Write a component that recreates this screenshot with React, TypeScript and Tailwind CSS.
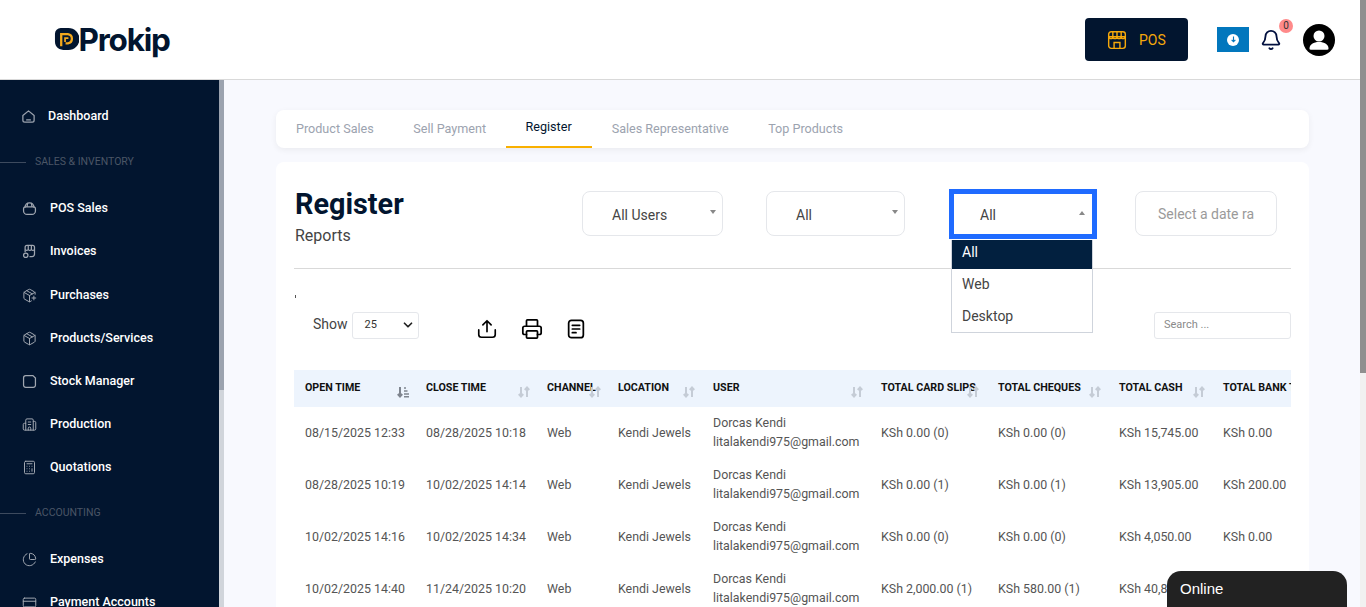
import { Bell, Building2, Calculator, ChartPie, ChevronDown, CreditCard, Package, PackagePlus, Printer } from "lucide-react"

const navTop = [
  { label: "POS Sales", icon: BasketIcon, cls: "h-[43px]" },
  { label: "Invoices", icon: ShopIcon, cls: "h-[43px]", shift: "ml-[1px]" },
  { label: "Purchases", icon: PackagePlus, cls: "h-[44px]" },
  { label: "Products/Services", icon: Package, cls: "h-[43px]" },
  { label: "Stock Manager", icon: FolderIcon, cls: "h-[43px]" },
  { label: "Production", icon: Building2, cls: "h-[43px]" },
  { label: "Quotations", icon: Calculator, cls: "h-[43px]" },
]

const tabs = ["Product Sales", "Sell Payment", "Register", "Sales Representative", "Top Products"]

const columns = [
  { label: "OPEN TIME", width: "w-[121px]", sort: "right-[6px]", active: true },
  { label: "CLOSE TIME", width: "w-[121px]", sort: "right-[6px]" },
  { label: "CHANNEL", width: "w-[71px]", sort: "right-[6px]" },
  { label: "LOCATION", width: "w-[95px]", sort: "right-[7px]" },
  { label: "USER", width: "w-[168px]", sort: "right-[7px]" },
  { label: "TOTAL CARD SLIPS", width: "w-[117px]", sort: "right-[8px]" },
  { label: "TOTAL CHEQUES", width: "w-[121px]", sort: "right-[7px]" },
  { label: "TOTAL CASH", width: "w-[104px]", sort: "right-[7px]" },
  { label: "TOTAL BANK TRANSFERS", width: "w-[79px]", sort: "" },
]

const widths = ["w-[121px]", "w-[121px]", "w-[71px]", "w-[95px]", "w-[168px]", "w-[117px]", "w-[121px]", "w-[104px]", "w-[79px]"]

const rows = [
  ["08/15/2025 12:33", "08/28/2025 10:18", "KSh 0.00 (0)", "KSh 0.00 (0)", "KSh 15,745.00", "KSh 0.00"],
  ["08/28/2025 10:19", "10/02/2025 14:14", "KSh 0.00 (1)", "KSh 0.00 (1)", "KSh 13,905.00", "KSh 200.00"],
  ["10/02/2025 14:16", "10/02/2025 14:34", "KSh 0.00 (0)", "KSh 0.00 (0)", "KSh 4,050.00", "KSh 0.00"],
  ["10/02/2025 14:40", "11/24/2025 10:20", "KSh 2,000.00 (1)", "KSh 580.00 (1)", "KSh 40,860.00", "KSh 0.00"],
]

function BasketIcon({ className }: { className?: string }) {
  return (
    <svg viewBox="0 0 24 24" fill="none" stroke="currentColor" strokeWidth="2" className={className}>
      <path d="M4.500 11C5 6 8 3 12 3s7 3 7.500 8" />
      <path d="M2.500 12.500c0-1.800 1.200-3 3-3h13c1.800 0 3 1.200 3 3V16c0 3-2.500 5.500-5.500 5.500H8C5 21.500 2.500 19 2.500 16z" />
      <path d="M9 3.500 8 9.500M15 3.500l1 6" />
    </svg>
  )
}

function FolderIcon({ className }: { className?: string }) {
  return (
    <svg viewBox="0 0 24 24" fill="none" stroke="currentColor" strokeWidth="2" className={className}>
      <path d="M6 2.500h11.500L21.500 6.500V18a3.500 3.500 0 0 1-3.500 3.500H6A3.500 3.500 0 0 1 2.500 18V6A3.500 3.500 0 0 1 6 2.500z" />
    </svg>
  )
}

function HomeIcon({ className }: { className?: string }) {
  return (
    <svg viewBox="0 0 24 24" fill="none" stroke="currentColor" strokeWidth="2" className={className}>
      <path d="M3 10.500 12 3l9 7.500V18a3 3 0 0 1-3 3H6a3 3 0 0 1-3-3z" strokeLinejoin="round" />
      <path d="M9 17.500h6" strokeLinecap="round" />
    </svg>
  )
}

function ShopIcon({ className }: { className?: string }) {
  return (
    <svg viewBox="0 0 24 24" fill="none" stroke="currentColor" strokeWidth="2" className={className}>
      <path d="M5 13V5a3 3 0 0 1 3-3h9a3 3 0 0 1 3 3v11a4 4 0 0 1-4 4h-4" />
      <path d="M5 9c1.500 1.500 3 1.500 5 0 1.500 1.500 3.500 1.500 5 0 1.500 1.500 3.500 1.500 5 0" />
      <path d="M10 2v7M15 2v7" />
      <circle cx="6" cy="18" r="3.500" />
    </svg>
  )
}

function PosIcon({ className }: { className?: string }) {
  return (
    <svg viewBox="0 0 24 24" fill="none" stroke="currentColor" strokeWidth="1.700" className={className}>
      <rect x="2" y="2" width="20" height="20" rx="3" />
      <path d="M2 8h20M7 2.500V8M12 2.500V8M17 2.500V8" />
      <path d="M2.500 8c0 3 4.500 3 4.500 0 0 3 5 3 5 0 0 3 5 3 5 0 0 3 4.500 3 4.500 0" />
      <path d="M8.500 21.500V15h7v6.500" />
    </svg>
  )
}

function SortIcon({ active }: { active?: boolean }) {
  return (
    <svg viewBox="0 0 12 12" className="h-[12px] w-[12px] text-[#c5ccd6]" fill="none" stroke="currentColor" strokeWidth="2">
      {active ? (
        <g className="text-[#7f858f]">
          <path d="M3 1v9.500M.800 8 3 10.500 5.200 8" />
          <path d="M7 2h2M7 5h3.500M7 8h5M7 10.800h5" strokeWidth="1.500" />
        </g>
      ) : (
        <g>
          <path d="M3 1v9.500M.800 8 3 10.500 5.200 8" />
          <path d="M9 1.500V11M6.800 4 9 1.500 11.200 4" />
        </g>
      )}
    </svg>
  )
}

function SelectBox({ label, w, ml }: { label: string; w: string; ml: string }) {
  return (
    <div className={`flex h-[45px] items-center justify-between rounded-lg border border-[#e5e7eb] bg-white pt-[3px] pl-[29px] pr-[6px] text-[14px] text-[#444] ${w} ${ml}`}>
      <span>{label}</span>
      <span className="mb-[7px] h-0 w-0 border-x-[3px] border-t-[4px] border-x-transparent border-t-[#888]" />
    </div>
  )
}

export default function App() {
  return (
    <div className="relative flex h-[607px] w-[1366px] overflow-hidden bg-[#f8f9fe] font-['Roboto',sans-serif]">
      <div className="flex min-w-0 flex-1 flex-col">
        <header className="flex h-[80px] shrink-0 items-center border-b border-[#d9d9d9] bg-white">
          <div className="ml-[54px] flex items-center">
            <svg viewBox="0 0 26 26" className="h-[25px] w-[25px]">
              <path d="M7 1h8a11.500 11.500 0 0 1 0 23h-3c-6.500 0-11-3-11-9V7a6 6 0 0 1 6-6z" fill="#02152f" />
              <path d="M7.500 20V7.500h7a4.800 4.800 0 0 1 0 9.500H12" fill="none" stroke="#f2a81d" strokeWidth="2.400" />
              <path d="M11.500 15.500V11.500h3.500" fill="none" stroke="#f2a81d" strokeWidth="1.800" />
            </svg>
            <span className="-ml-[0.5px] font-['Inter',sans-serif] text-[31.5px] leading-none font-bold tracking-[-1.2px] text-[#02152f]">Prokip</span>
          </div>
          <div className="ml-auto flex items-center">
            <div className="flex h-[43px] w-[103px] items-center rounded-[4px] bg-[#02152f] pl-[22px] text-[#f5a80b]">
              <PosIcon className="h-[20px] w-[20px]" />
              <span className="mt-[1px] ml-[12px] text-[14px]">POS</span>
            </div>
            <div className="ml-[29px] flex h-[25px] w-[32px] items-center justify-center bg-[#0277bd]">
              <div className="flex h-[12px] w-[12px] items-center justify-center rounded-full bg-white">
                <svg viewBox="0 0 12 12" className="h-[9px] w-[9px] text-[#0277bd]" fill="none" stroke="currentColor" strokeWidth="1.500"><path d="M6 2v7M3.500 6.500 6 9l2.500-2.500" /></svg>
              </div>
            </div>
            <div className="relative ml-[11px] h-[24px] w-[22px]">
              <Bell className="h-[24px] w-[22px] text-[#02103f]" strokeWidth={2} />
              <span className="absolute -top-[9px] left-[19px] flex h-[14px] w-[14px] items-center justify-center rounded-full bg-[#ff8a8a] text-[10px] text-[#333]">0</span>
            </div>
            <div className="ml-[21px] mr-[25px] flex h-[32px] w-[32px] items-center justify-center overflow-hidden rounded-full bg-black">
              <svg viewBox="0 0 32 32" className="h-[32px] w-[32px]" fill="#fff">
                <circle cx="16" cy="12" r="5.500" />
                <path d="M6.500 24.500c0-4 4-6.500 9.500-6.500s9.500 2.500 9.500 6.500c0 .8-.5 1.200-1.200 1.200H7.700c-.7 0-1.200-.4-1.200-1.200z" />
              </svg>
            </div>
          </div>
        </header>
        <div className="flex min-h-0 flex-1">
          <aside className="w-[219px] shrink-0 bg-[#02152f] text-[12.500px] text-white">
            <a className="mt-[15px] flex h-[43px] items-center pl-[21px]">
              <HomeIcon className="h-[15px] w-[15px] text-[#9ca3af]" />
              <span className="ml-[12px] font-medium">Dashboard</span>
            </a>
            <div className="mt-[18px] mb-[19px] flex h-[12px] items-center">
              <span className="h-px w-[26px] bg-[#3d4a5e]" />
              <span className="ml-[9px] text-[10.500px] text-[#4b5666]">SALES &amp; INVENTORY</span>
            </div>
            {navTop.map(({ label, icon: Icon, cls, shift }) => (
              <a key={label} className={`flex items-center pl-[22px] ${cls}`}>
                <Icon className="h-[15px] w-[15px] shrink-0 text-[#a0a6b0]" strokeWidth={1.600} />
                <span className={`ml-[13px] font-medium ${shift ?? ""}`}>{label}</span>
              </a>
            ))}
            <div className="mt-[18px] mb-[19px] flex h-[12px] items-center">
              <span className="h-px w-[26px] bg-[#3d4a5e]" />
              <span className="ml-[9px] text-[10.500px] text-[#4b5666]">ACCOUNTING</span>
            </div>
            <a className="flex h-[43px] items-center pl-[22px]">
              <ChartPie className="h-[15px] w-[15px] text-[#a0a6b0]" strokeWidth={1.600} />
              <span className="ml-[13px] font-medium">Expenses</span>
            </a>
            <a className="flex h-[43px] items-center pl-[22px]">
              <CreditCard className="h-[15px] w-[15px] text-[#a0a6b0]" strokeWidth={1.600} />
              <span className="ml-[13px] font-medium">Payment Accounts</span>
            </a>
          </aside>
          <div className="flex w-[5px] shrink-0 flex-col bg-[#d1d5db]">
            <div className="h-[310px] bg-[#9ca3af]" />
          </div>
          <main className="min-w-0 flex-1 overflow-hidden pt-[30px] pl-[52px] pr-[51px]">
            <nav className="flex h-[38px] rounded-lg bg-white pl-[20px] text-[12.600px] text-[#9ca3af] shadow-[0_2px_6px_rgba(0,0,0,0.06)]">
              {tabs.map((t) => (
                <div key={t} className={t === "Register" ? "-ml-[20px] mr-[20px] flex items-center border-b-2 border-[#f9b000] px-[20px] pb-[1px] text-[#02152f]" : "mr-[39.500px] flex items-center"}>
                  {t}
                </div>
              ))}
            </nav>
            <section className="mt-[14px] rounded-t-lg bg-white px-[18px] pb-[20px]">
              <div className="relative flex h-[107px] items-start border-b border-[#d9d9d9] pt-[29px]">
                <div className="w-[233px] shrink-0 pl-[1px]">
                  <h1 className="text-[28.800px] leading-[26px] font-bold text-[#02152f]">Register</h1>
                  <p className="mt-[9px] text-[16px] leading-[20px] text-[#444]">Reports</p>
                </div>
                <div className="flex">
                  <SelectBox label="All Users" w="w-[141px]" ml="ml-[55px]" />
                  <SelectBox label="All" w="w-[139px]" ml="ml-[43px]" />
                  <div className="ml-[44px] flex h-[50px] w-[148px] -translate-y-[2px] items-center justify-between border-[5px] border-[#1f6bff] bg-white pt-[2px] pl-[26px] pr-[7px] text-[14px] text-[#444]">
                    <span>All</span>
                    <span className="mb-[5px] h-0 w-0 border-x-[3px] border-b-[4px] border-x-transparent border-b-[#888]" />
                  </div>
                  <div className="ml-[38px] flex h-[45px] w-[142px] items-center overflow-hidden rounded-lg border border-[#e5e7eb] pt-[1px] pl-[22px] text-[14px] whitespace-nowrap text-[#9a9a9a]">
                    Select a date ra
                  </div>
                </div>
                <ul className="absolute top-[78px] left-[657px] z-10 w-[142px] border border-[#cfd4dc] border-t-0 bg-white text-[14px] text-[#444]">
                  <li className="h-[29px] bg-[#02203f] pl-[10px] leading-[24px] text-white">All</li>
                  <li className="pl-[10px] leading-[31px]">Web</li>
                  <li className="pl-[10px] leading-[32px]">Desktop</li>
                </ul>
              </div>
              <div className="h-[5px] pt-[26px] pl-[1px]"><span className="block h-[3px] w-px bg-[#555]" /></div>
              <div className="flex h-[60px] items-start pt-[38px]" />
              <div className="-mt-[46px] flex h-[32px] items-center">
                <span className="mb-[2px] ml-[19px] text-[14px] text-[#444]">Show</span>
                <div className="ml-[4px] flex h-[27px] w-[67px] items-center justify-between rounded-[3px] border border-[#e5e7eb] pl-[12px] pr-[3px] text-[11px] text-[#333]">
                  25
                  <ChevronDown className="h-[14px] w-[14px] text-[#222]" strokeWidth={3} />
                </div>
                <svg viewBox="0 0 24 24" className="mt-[8px] ml-[57px] h-[22px] w-[22px] text-black" fill="none" stroke="currentColor" strokeWidth="1.800" strokeLinecap="round" strokeLinejoin="round">
                  <path d="M12 15V3M7.500 7.500 12 3l4.500 4.500" />
                  <path d="M3 13v5a3 3 0 0 0 3 3h12a3 3 0 0 0 3-3v-5" />
                </svg>
                <Printer className="mt-[8px] ml-[23px] h-[22px] w-[22px] text-black" strokeWidth={1.900} />
                <svg viewBox="0 0 24 24" className="mt-[8px] ml-[22px] h-[22px] w-[22px] text-black" fill="none" stroke="currentColor" strokeWidth="1.900" strokeLinecap="round">
                  <rect x="4" y="2.500" width="16" height="19" rx="3" />
                  <path d="M8 8h8M8 12h8M8 16h4" />
                </svg>
                <div className="ml-auto flex h-[27px] w-[137px] items-center rounded-[3px] border border-[#e5e7eb] pl-[9px] text-[11px] text-[#8a8a8a]">Search ...</div>
              </div>
              <div className="mt-[29px] w-[997px] overflow-hidden">
                <div className="flex h-[37px] w-[997px] bg-[#edf4fd] text-[10.700px] font-bold text-[#111]">
                  {columns.map((c) => (
                    <div key={c.label} className={`relative flex shrink-0 items-center overflow-hidden pl-[11px] whitespace-nowrap ${c.width}`}>
                      <span>{c.label}</span>
                      {c.sort && <span className={`absolute top-[16px] ${c.sort}`}><SortIcon active={c.active} /></span>}
                    </div>
                  ))}
                </div>
                {rows.map((r) => (
                  <div key={r[0]} className="flex h-[52px] items-center pb-[2px] text-[12.400px] text-[#555]">
                    <div className={`mt-[2px] pl-[11px] ${widths[0]}`}>{r[0]}</div>
                    <div className={`mt-[2px] pl-[11px] ${widths[1]}`}>{r[1]}</div>
                    <div className={`mt-[2px] pl-[11px] ${widths[2]}`}>Web</div>
                    <div className={`mt-[2px] pl-[11px] ${widths[3]}`}>Kendi Jewels</div>
                    <div className={`pl-[11px] leading-[19px] ${widths[4]}`}>
                      Dorcas Kendi
                      <br />
                      litalakendi975@gmail.com
                    </div>
                    <div className={`mt-[2px] pl-[11px] ${widths[5]}`}>{r[2]}</div>
                    <div className={`mt-[2px] pl-[11px] ${widths[6]}`}>{r[3]}</div>
                    <div className={`mt-[2px] pl-[11px] ${widths[7]}`}>{r[4]}</div>
                    <div className={`mt-[2px] pl-[11px] whitespace-nowrap ${widths[8]}`}>{r[5]}</div>
                  </div>
                ))}
              </div>
            </section>
          </main>
        </div>
      </div>
      <div className="flex w-[6px] shrink-0 flex-col bg-[#f1f1f1]">
        <div className="h-[373px] bg-[#8f8f8f]" />
      </div>
      <div className="absolute right-[19px] bottom-0 h-[36px] w-[180px] rounded-t-[14px] bg-[#222] pt-[7px] pl-[13px] font-['Liberation_Sans',sans-serif] text-[15px] text-white">Online</div>
    </div>
  )
}
